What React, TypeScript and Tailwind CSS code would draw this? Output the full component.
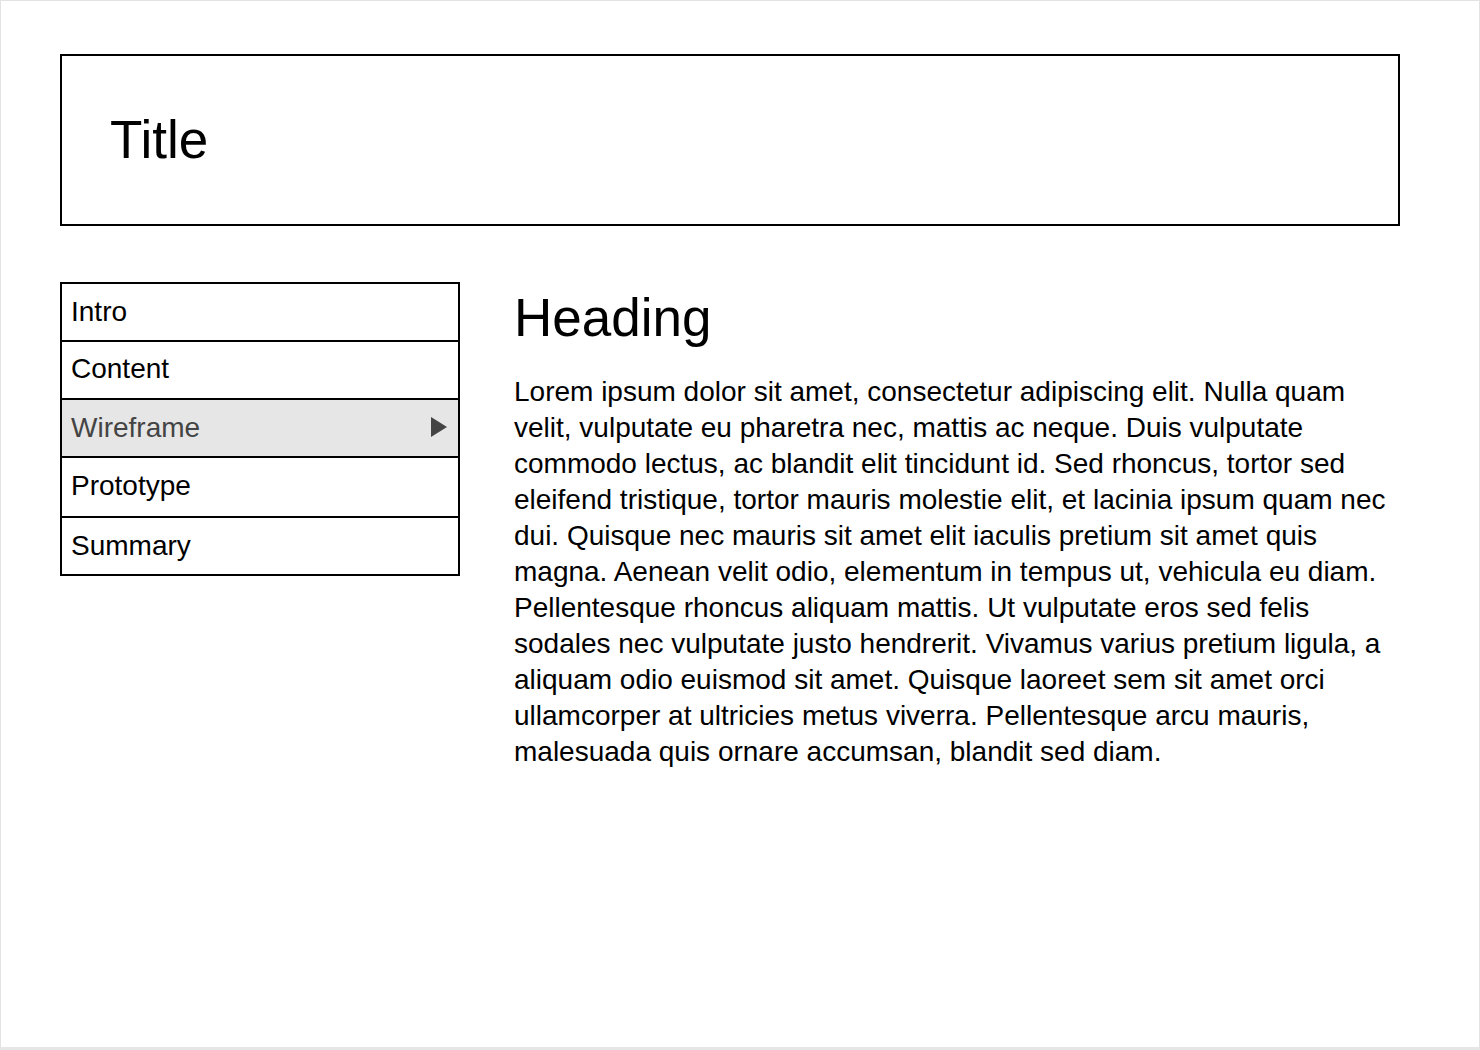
import React from "react";

const items = [
  { label: "Intro", cls: "h-[58px] pt-[2px]" },
  { label: "Content", cls: "h-[58px] pt-[1px]" },
  { label: "Wireframe", cls: "h-[58px] pt-[2px] bg-[#e6e6e6] text-[#444444]", active: true },
  { label: "Prototype", cls: "h-[60px] pt-[2px]" },
  { label: "Summary", cls: "h-[58px] pt-[2px]" },
];

export default function App() {
  return (
    <div
      className="w-[1480px] h-[1050px] bg-white border-l border-t border-r border-b-[3px] border-l-[#e3e3e3] border-t-[#e3e3e3] border-r-[#e3e3e3] border-b-[#e6e6e6] text-black"
      style={{ fontFamily: '"Liberation Sans", Arial, Helvetica, sans-serif' }}
    >
      <div className="pl-[59px] pr-[79px] pt-[53px]">
        <header className="h-[172px] border-2 border-black pl-[48px] pt-[53px]">
          <h1 className="text-[53px] leading-[62px] font-normal">Title</h1>
        </header>
        <div className="flex mt-[56px]">
          <nav className="w-[400px] shrink-0 self-start border-2 border-black border-b-0">
            {items.map((it) => (
              <div
                key={it.label}
                className={`flex items-start justify-between border-b-2 border-black pl-[9px] pr-[11px] text-[28px] leading-[52px] ${it.cls}`}
              >
                <span>{it.label}</span>
                {it.active && (
                  <svg width="16" height="20" viewBox="0 0 16 20" className="mt-[15px]">
                    <polygon points="0,0 16,10 0,20" fill="#444444" />
                  </svg>
                )}
              </div>
            ))}
          </nav>
          <main className="ml-[54px] flex-1 pt-[6px]">
            <h2 className="text-[53px] leading-[60px] font-normal">Heading</h2>
            <p className="mt-[26px] text-[28px] leading-[36px]">
              Lorem ipsum dolor sit amet, consectetur adipiscing elit. Nulla quam velit, vulputate eu pharetra nec,
              mattis ac neque. Duis vulputate commodo lectus, ac blandit elit tincidunt id. Sed rhoncus, tortor sed
              eleifend tristique, tortor mauris molestie elit, et lacinia ipsum quam nec dui. Quisque nec mauris sit
              amet elit iaculis pretium sit amet quis magna. Aenean velit odio, elementum in tempus ut, vehicula eu
              diam. Pellentesque rhoncus aliquam mattis. Ut vulputate eros sed felis sodales nec vulputate justo
              hendrerit. Vivamus varius pretium ligula, a aliquam odio euismod sit amet. Quisque laoreet sem sit amet
              orci ullamcorper at ultricies metus viverra. Pellentesque arcu mauris, malesuada quis ornare accumsan,
              blandit sed diam.
            </p>
          </main>
        </div>
      </div>
    </div>
  );
}
